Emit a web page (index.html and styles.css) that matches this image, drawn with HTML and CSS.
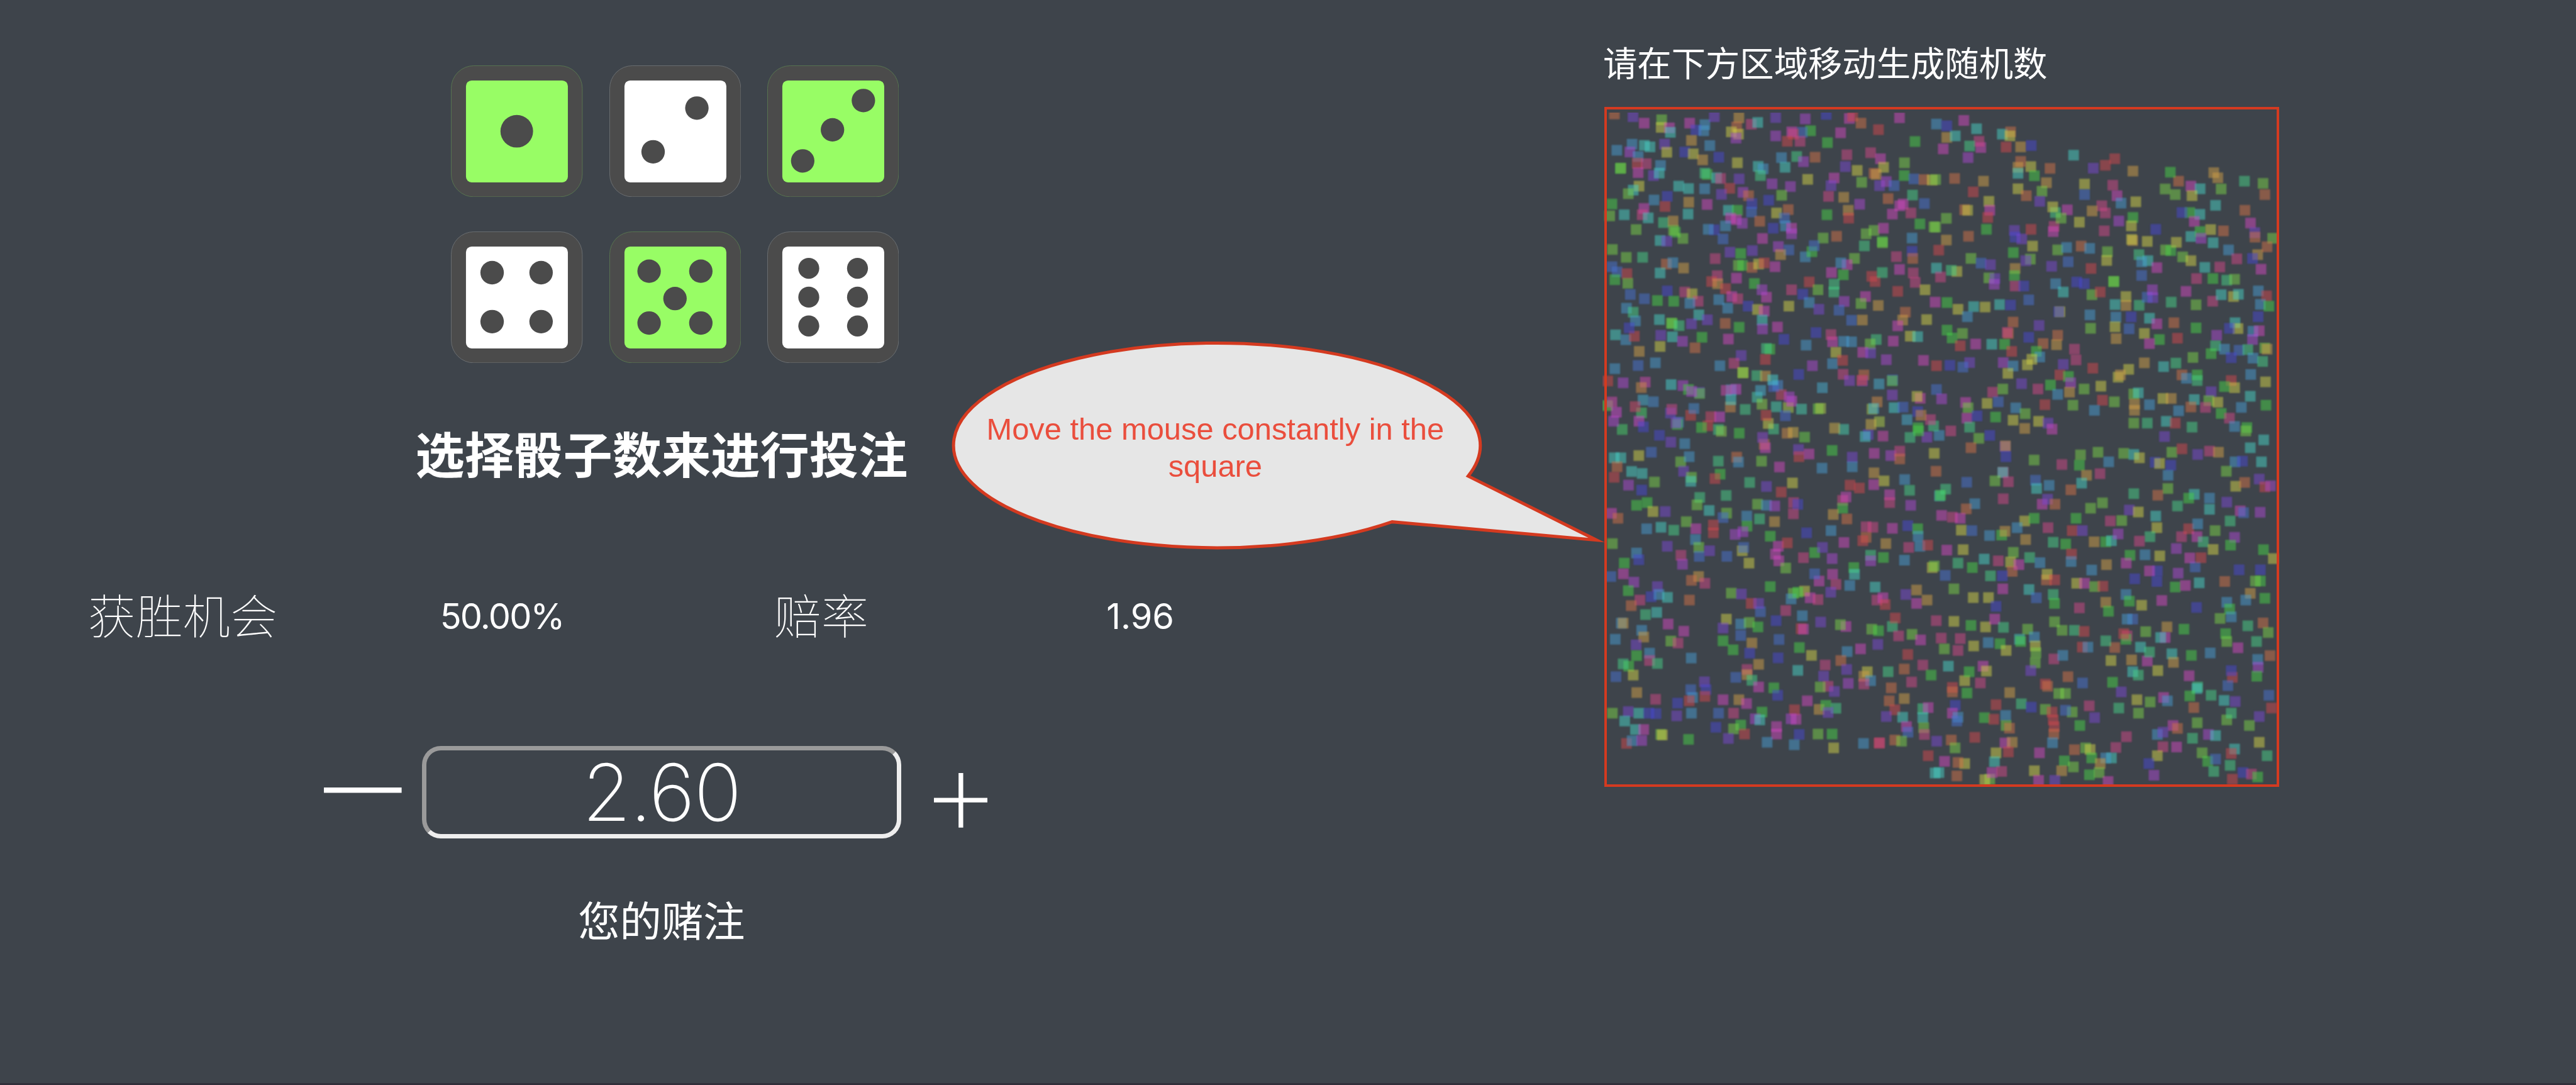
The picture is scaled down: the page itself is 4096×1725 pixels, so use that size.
FILE: index.html
```html
<!DOCTYPE html>
<html lang="zh-CN">
<head>
<meta charset="utf-8">
<title>Dice</title>
<link rel="stylesheet" href="styles.css">
</head>
<body>
<main class="stage">
  <section class="bet">
    <div class="dice">
      <svg class="die picked" viewBox="0 0 210 210"><rect class="edge" x=".5" y=".5" width="209" height="209" rx="36"/><rect class="face" x="24" y="24" width="162.500" height="162.500" rx="9"/><circle cx="105" cy="105" r="26"/></svg>
      <svg class="die" viewBox="0 0 210 210"><rect class="edge" x=".5" y=".5" width="209" height="209" rx="36"/><rect class="face" x="24" y="24" width="162.500" height="162.500" rx="9"/><circle cx="139.500" cy="68" r="18.700"/><circle cx="69.700" cy="137.700" r="18.700"/></svg>
      <svg class="die picked" viewBox="0 0 210 210"><rect class="edge" x=".5" y=".5" width="209" height="209" rx="36"/><rect class="face" x="24" y="24" width="162.500" height="162.500" rx="9"/><circle cx="153.300" cy="56" r="18.700"/><circle cx="104" cy="102.700" r="18.700"/><circle cx="56.500" cy="152.300" r="18.700"/></svg>
      <svg class="die" viewBox="0 0 210 210"><rect class="edge" x=".5" y=".5" width="209" height="209" rx="36"/><rect class="face" x="24" y="24" width="162.500" height="162.500" rx="9"/><circle cx="65.700" cy="65.700" r="18.700"/><circle cx="143.800" cy="65.700" r="18.700"/><circle cx="65.700" cy="143.700" r="18.700"/><circle cx="143.800" cy="143.700" r="18.700"/></svg>
      <svg class="die picked" viewBox="0 0 210 210"><rect class="edge" x=".5" y=".5" width="209" height="209" rx="36"/><rect class="face" x="24" y="24" width="162.500" height="162.500" rx="9"/><circle cx="63.300" cy="63.300" r="18.700"/><circle cx="145.800" cy="63.300" r="18.700"/><circle cx="104.600" cy="107" r="18.700"/><circle cx="63.300" cy="146" r="18.700"/><circle cx="145.800" cy="146" r="18.700"/></svg>
      <svg class="die" viewBox="0 0 210 210"><rect class="edge" x=".5" y=".5" width="209" height="209" rx="36"/><rect class="face" x="24" y="24" width="162.500" height="162.500" rx="9"/><circle cx="66.200" cy="58.700" r="16.700"/><circle cx="143.900" cy="58.700" r="16.700"/><circle cx="66.200" cy="104.700" r="16.700"/><circle cx="143.900" cy="104.700" r="16.700"/><circle cx="66.200" cy="150.700" r="16.700"/><circle cx="143.900" cy="150.700" r="16.700"/></svg>
    </div>
    <h1 class="heading">选择骰子数来进行投注</h1>
    <div class="stats">
      <span class="label">获胜机会</span><span class="value percent">50.00%</span>
      <span class="label">赔率</span><span class="value">1.96</span>
    </div>
    <div class="stake">
      <svg class="minus" viewBox="0 0 124 9"><rect width="124" height="8.500"/></svg>
      <div class="amount"><span>2.60</span></div>
      <svg class="plus" viewBox="0 0 86 87"><path d="M0 39.500h39.300V0h7.400v39.500H86v7.500H46.700v40h-7.400V47H0z"/></svg>
    </div>
    <p class="caption">您的赌注</p>
  </section>
  <section class="entropy">
    <h2 class="hint">请在下方区域移动生成随机数</h2>
    <div class="field"><canvas class="specks" id="specks" width="1080" height="1075"></canvas></div>
  </section>
  <aside class="bubble">
    <svg viewBox="0 0 1060 340"><path d="M826.900 216.500A420 163.200 0 1 0 705.500 289.500L1031.500 318.500Z"/></svg>
    <p>Move the mouse constantly in the<br>square</p>
  </aside>
</main>
<script>
// Hue of each colour letter.
const HUES = { r: 357, o: 18, a: 38, y: 60, l: 98, g: 120, t: 148, c: 175, s: 203, b: 222, i: 240, v: 262, p: 284, m: 308, k: 332 };

// Quadrants of the field: origin, then colour letter with the centre of each speck.
const QUADS = [
  [2530, 50, `o126,370 v209,382 m259,411 l337,396 y335,430 m372,432 c376,452 m462,411 s530,418 i490,442 s525,445 v572,382 a682,387 o672,428 y648,450 y680,460 p669,478 k737,416 c766,408 v846,386 i1072,372 p978,392 m1175,390 r1190,380 o1227,411 r1305,440 m1399,387 g1002,445 b965,452 p846,468 r925,460 m918,450 r898,492 k955,492 g1077,498 m1136,454 g1468,493 a470,488 s552,511 c260,510 s205,505 s137,532 c285,517 v350,505 y360,541 p195,540 s232,560 i440,540 y478,548 a520,575 i592,563 y675,588 c768,604 s790,615 t778,645 s872,565 t940,560 p970,583 o1022,563 c888,608 k1164,552 k1270,543 m1314,570 v1157,605 y1210,622 y1328,608 l1421,588 o1285,635 a1295,640 g152,613 l155,612 r228,590 k268,592 m232,632 s332,600 v300,645 c326,634 g540,640 t530,634 c582,655 k600,658 v683,660 p830,682 p912,694 y989,662 m1107,656 v1093,690 k1082,738 l1230,675 g1420,645 b1463,660 o1508,663 y1545,665 v1310,690 p1340,672 b1375,690 y236,692 c210,710 l188,726 c413,692 c457,703 s529,704 r641,702 v604,729 p700,720 o725,735 l873,733 i815,755 a1150,742 p1221,773 o1348,748 m1415,772 m1400,780 t1457,732 b1510,770 k1450,812 m1367,817 g115,772 s303,754 i362,738 r352,783 a458,764 m540,774 m258,792 k250,820 c277,834 c170,820 l105,825 c455,817 c635,800 g675,800 i740,770 b738,808 m645,835 m670,842 p697,858 o775,849 y850,812 o902,797 b885,835 g1075,820 a1170,800 r1172,835 l223,886 t345,855 a388,848 g398,898 l390,890 l432,926 c330,935 v360,938 i572,887 s545,885 s622,870 b611,928 m787,926 i835,880 s890,870 m917,880 p917,905 l1058,924 o1118,916 l1250,905 l1285,890 m1327,880 g1322,940 l1323,945 t1242,959 g1490,861 l1553,874 s1455,924 l117,975 l179,1010 t252,1010 k576,1016 v642,987 g690,993 v742,980 p858,962 b905,977 a868,998 s978,1008 g1008,985 b1018,958 l1198,1015 k1385,1007 i1455,983 o1458,1015 b115,1052 b138,1075 r182,1083 g128,1110 l186,1126 o358,1040 s387,1034 a435,1058 c330,1080 l680,1046 g698,1046 o740,1055 y770,1040 r795,1035 m843,1052 m1165,1043 s1137,1035 g1148,1088 m1095,1078 r1275,1095 r1290,1118 t1322,1078 m1399,1064 k1460,1080 k585,1092 r560,1118 a587,1128 m671,1103 g751,1127 r996,1120 l1035,1155 t1107,1130 t1106,1165 k1469,1122 y1513,1155 r1391,1162 b197,1176 b260,1195 i362,1160 k440,1165 y473,1173 g318,1203 g391,1206 k500,1206 s463,1215 c503,1267 s592,1199 s632,1237 r622,1150 m650,1185 k677,1195 m805,1188 p785,1155 i723,1228 y765,1243 m795,1250 c786,1290 p787,1330 k917,1155 i967,1175 s996,1212 y905,1228 v1039,1242 m1247,1185 p1152,1207 l1227,1216 a1304,1225 b1129,1246 s180,1237 t210,1255 s220,1294 c327,1288 g384,1305 l381,1304 t415,1315 v470,1307 v541,1289 o621,1305 g683,1322 m854,1321 b1185,1291 a1233,1290 o1425,1255 a1413,1290 m1391,1316 y1520,1288 i1026,1346 c131,1356 s177,1378 r215,1362 i192,1325 v333,1358 c385,1365 p430,1385 g517,1367 y330,1408 a237,1430 o486,1414 m635,1375 i883,1376 s982,1402 m1100,1387 s1150,1385 s1185,1387 k1093,1355 t1295,1377 l1268,1397 m1371,1384 y1447,1362 c1480,1364 g820,1420 t805,1417 v692,1448 k660,1483 r800,1466 y1115,1434 s1100,1485 r1145,1470 m1235,1434 v1270,1437 p1340,1467 m1506,1470 s128,1507 b232,1493 s309,1481 s597,1494 y700,1525 l700,1525 t762,1538 a800,1540 i949,1533 p1010,1494 k1147,1532 o1240,1535`],
  [3080, 150, `s24,135 i70,143 m146,119 c203,156 a70,195 c108,188 m222,240 k214,212 t172,233 p165,285 m54,246 c318,180 o355,170 y352,188 r335,238 a400,237 i447,231 c636,274 r820,290 r778,319 v724,332 a901,345 o531,333 y445,325 g461,366 o400,302 a388,328 c388,355 y388,424 o425,455 a515,397 l495,435 v485,480 a234,390 o105,378 l20,383 r188,438 y258,480 m262,520 r253,552 g247,605 o150,518 y163,520 y685,403 b685,450 k811,408 m830,455 s848,488 y914,482 k762,500 k778,532 a719,523 y662,573 g901,552 y894,590 a900,655 y895,650 y965,659 i1003,605 p838,568 k773,612 o1105,390 l1045,425 l1090,450 g1068,350 m1160,412 c1201,424 y1165,455 a1262,352 a1280,375 l1295,425 t1399,390 l1482,400 o1490,450 o1401,520 m1426,577 c1270,498 g1155,530 c1200,538 m1175,570 i1120,530 c1160,637 g1201,615 y1248,606 o1305,612 c1259,665 p1205,645 s1328,697 k1365,737 v1445,620 o1446,640 l1525,645 a1458,718 o1500,683 m1473,783 i1435,735 l68,556 l20,595 a68,653 o167,636 r34,698 l178,735 b223,756 v265,763 c24,778 y115,793 t90,788 k42,818 l258,822 v285,825 p282,850 v372,610 i375,640 v405,648 r446,605 k549,592 m545,615 t555,530 y543,505 m608,518 l580,555 y453,680 g367,709 l443,738 v423,745 a375,780 g372,812 k375,858 i414,858 l565,697 s605,686 o670,680 s708,690 l787,705 y784,744 v538,770 b612,750 r714,780 l1047,697 g1070,700 y1095,663 l1123,728 y1160,745 t928,718 c968,745 s940,750 m1008,776 b940,811 c1222,775 k1289,773 g1258,825 k1185,825 t1320,832 l1355,828 g816,838 l815,838 i650,840 i684,848 s556,848 c590,885 l718,897 r755,885 y870,905 a870,945 c821,941 t929,944 b965,908 v990,910 p988,875 m1138,882 t1072,930 l1183,942 k1257,926 c1295,897 y1350,905 c1372,895 s1461,880 r1498,902 s1470,940 g1508,948 m18,930 g71,932 y120,962 c190,950 y241,952 c306,941 i355,943 b436,920 s162,995 o366,1019 v482,1034 y575,973 i570,973 s709,987 l712,1047 s825,997 y821,1040 i893,996 b884,1049 a826,1093 c975,1002 m1008,1027 y952,1070 o1084,1022 g1183,1045 r1100,1091 g1019,1097 m975,1115 i1460,995 c1357,1022 y1370,1048 i1332,1047 s1437,1060 m1465,1058 p1435,1097 p1275,1078 t1270,1125 g1250,1160 g71,1055 g94,1090 l140,1070 r130,1125 m199,1117 c271,1118 g328,1118 o345,1070 k340,1065 i436,1087 o565,1078 a560,1120 o500,1115 k640,1140 k647,1188 r360,1150 g470,1150 s485,1175 y450,1185 y430,1210 p322,1200 s366,1215 y343,1248 v404,1294 v172,1200 b142,1220 i84,1212 r24,1214 v590,1208 r575,1255 g613,1262 p623,1290 a618,1332 r722,1225 l1169,1177 a952,1201 t1093,1202 c1038,1218 o1120,1255 s1140,1270 g1188,1255 t1188,1280 s1310,1140 b1375,1145 t1414,1142 i1340,1178 s1437,1180 l1490,1135 a1500,1140 t1480,1195 s1427,1253 y1493,1286 r1340,1280 g1310,1307 y1355,1312 v1250,1330 l1240,1370 y1280,1377 k1225,1400 c1175,1365 s1105,1415 o1160,1398 b24,1320 k275,1332 l320,1318 k477,1318 g533,1300 s565,1342 l683,1318 l633,1390 y758,1305 r765,1368 l818,1375 r508,1388 s729,1413 y835,1265 y882,1230 a845,1255 l905,1340 c925,1335 s975,1388 y1035,1360 a1072,1360 a908,1413 a908,1385 l905,1470 t965,1470 c1050,1462 r1090,1470 t1165,1488 v1042,1530 s1385,1400 c1425,1350 g1295,1427 k1332,1448 g1410,1490 l1405,1505 s1355,1485 c1485,1545 g1495,1390 p47,1362 y250,1382 m154,1378 l165,1402 m160,1448 i205,1438 t172,1488 g288,1443 b300,1375 s378,1402 l420,1428 y366,1457 y480,1462 a418,1494 v522,1470 m540,1497 k88,1505 s36,1525 i262,1525 l213,1538`],
  [2530, 700, `v378,15 s440,22 b291,60 y235,75 c125,85 c155,85 o138,125 r125,172 c203,146 c250,155 l305,193 p189,207 i248,229 l422,103 s460,80 v435,145 l470,172 c467,190 o672,82 s680,104 l783,100 t590,100 g598,158 r575,178 m863,126 v805,213 t730,195 y921,197 o795,25 m800,40 v948,48 r950,80 m995,68 g1098,52 s1053,131 v1188,82 s1188,125 m1286,65 p1360,75 k1400,55 o1400,90 a1285,152 m1284,205 y1330,188 s1422,182 t1444,230 m1355,250 k1355,285 p1449,297 r1178,207 r1220,220 r871,238 t625,253 t507,262 l495,295 g272,285 g225,297 y298,325 v353,325 c549,320 l627,332 b611,352 l765,292 s805,297 p842,300 k926,285 i945,293 k925,335 a841,370 t774,358 s717,345 g718,390 p700,415 p665,427 m113,333 o142,355 s270,402 c334,395 t391,408 l447,370 m490,402 r568,385 r568,420 s488,450 l503,485 b505,525 v362,480 l117,468 k423,520 p430,560 v551,500 y697,500 b703,485 b628,525 y727,555 g822,435 m858,480 m845,515 r898,465 m860,545 l891,577 k970,531 g1020,508 i984,420 s1093,410 v1055,485 p1098,535 m1151,463 k1145,275 m1160,260 g1145,310 a1103,338 o1164,358 k1250,393 k1280,395 o1250,440 r1235,455 m1367,400 i1436,388 g1480,402 s1482,435 a1338,468 k1440,485 s1490,480 r1525,475 s1421,542 g1327,530 t1270,520 p1270,545 g1195,575 c1198,605 s1177,655 c1290,662 s225,510 i235,540 g170,555 m166,603 b110,615 p213,640 g188,678 v318,660 i290,705 s325,695 c363,708 k240,720 o201,745 t265,785 c315,775 a502,615 o470,632 k530,645 o461,720 l648,689 v693,693 g822,660 r737,735 b778,772 v770,735 y975,680 l925,690 s915,715 g945,685 m1000,710 k1035,718 m1100,605 m1040,635 k1115,650 v1092,685 b1020,603 v1427,695 a1475,675 m1475,735 a1522,720 y1545,575 k1298,720 m1325,710 r1335,740 k891,767 s965,790 y626,805 v611,845 s690,827 l728,820 g767,840 b690,878 i848,812 b861,896 r960,848 m970,850 v1047,818 m1160,838 l1135,830 l1275,850 g1305,857 t1367,838 r1380,800 k1395,880 l1455,873 m1493,898 s157,823 a165,823 s248,855 a257,885 m366,827 m436,859 s130,895 l378,903 k410,912 v223,920 g225,968 s283,957 k283,990 t318,1003 g190,1015 t165,1005 y210,1055 b133,1062 s469,979 g611,902 g656,942 a740,912 i730,957 i857,978 g952,932 y1006,967 m1225,938 s1165,950 o1137,990 v1302,918 r1436,963 k1503,1010 t1348,1040 o1420,1028 g1540,1055 k718,1030 a770,1007 a718,1053 t740,1078 b668,1065 m770,1108 c945,1034 k1067,1010 v1163,1030 p1170,1092 v1060,1060 k1080,1105 l1045,1108 v1108,1128 y1255,1040 a1240,1060 s1270,1080 k1240,1095 k1453,1086 o1362,1112 o1353,1170 a1420,1160 a226,1133 k310,1163 b467,1120 v528,1085 i535,1120 r530,1150 s475,1155 r460,1170 i408,1180 v404,1237 s470,1225 m611,1165 a682,1165 m716,1182 g838,1112 i855,1145 b591,1225 k658,1225 g785,1220 p755,1250 c775,1255 m987,1170 r930,1210 p915,1250 m937,1252 a1040,1208 g1070,1190 t1115,1203 v1080,1222 r1378,1210 v1340,1240 c1413,1243 m1430,1285 b1437,1310 t1503,1205 m1527,1200 c1503,1245 l1507,1290 k1510,1320 l117,1225 v188,1218 c235,1225 i280,1225 i312,1227 c172,1260 c220,1298 m257,1298 l333,1320 y340,1322 g457,1342 r180,1360 s205,1348 p248,1347 i579,1288 g690,1278 l658,1295 r707,1318 v635,1338 m850,1285 m850,1318 s808,1355 i951,1320 s929,1366 l1035,1318 g1098,1318 y1105,1380 s1238,1360 r1308,1358 k1310,1358 o1378,1345 l1408,1350 r1527,1415 c1558,1492`],
  [3080, 700, `o178,40 v330,35 a332,32 i334,80 y14,65 o22,145 k322,150 c320,150 l285,188 k345,192 b159,194 t65,225 c38,255 g42,252 k322,268 s195,290 o157,313 m47,342 k95,350 m130,355 y135,408 b182,410 l460,95 s505,22 a530,15 b685,22 r785,25 l667,72 g662,118 k584,115 l745,60 s793,103 k754,156 a694,163 c672,198 o624,228 b466,185 c471,222 s527,208 m496,292 v520,270 o553,292 l765,286 l712,310 g647,355 k800,367 l851,365 t905,245 v885,318 y925,327 l860,65 c905,70 y930,85 i1000,105 y1020,110 i1070,118 s1058,163 l1057,222 o1012,252 l1075,60 r1120,45 v1190,70 k1243,55 a1283,60 c1425,40 s1357,103 i1390,100 c1475,103 l1318,145 y1360,212 o1400,195 v1465,180 r1490,215 p1515,210 c1175,248 g1150,265 t1100,300 s1243,265 c1243,315 v1320,283 m1380,322 b1395,330 p1469,328 t1335,367 c1003,345 y1008,397 t977,437 g888,520 k930,457 s955,518 y1021,523 a783,562 m871,555 s717,586 y418,367 g460,355 s384,397 k522,397 s261,432 g315,430 a330,413 a422,450 t545,462 g601,470 r630,410 v675,410 a728,460 g780,460 c805,455 p835,425 m70,497 y143,495 l14,568 t120,555 g184,575 b63,610 l102,670 y188,709 y256,709 k300,545 c237,537 l367,507 y355,550 o362,592 m392,562 t440,530 s486,553 t265,612 i318,612 m320,670 i290,748 c437,673 b470,710 r627,515 s625,548 o515,630 y518,605 r552,630 y650,645 m685,645 l730,660 r767,658 t545,695 g551,735 k662,755 a780,730 g792,770 s870,695 g885,725 y940,743 b900,805 s875,805 m1030,722 i1010,590 m975,590 i1008,637 i909,625 p1103,600 g1090,662 m1135,655 c1197,643 b1179,572 m1155,532 r1205,531 p1095,490 k1118,437 r1150,402 m1187,437 t1215,460 s1190,380 l1268,410 y1259,494 p1355,440 g1337,475 g1484,495 y1528,535 i1375,585 i1470,585 g1470,635 l1448,635 a1425,690 o1311,637 s1405,720 g1490,712 s1320,730 g1333,760 s1340,795 l1290,802 i1185,753 k23,812 y102,815 g178,833 y243,840 m284,805 t323,842 l551,817 l585,855 t640,855 r683,860 l431,850 s461,885 c395,895 g400,905 y465,925 l468,955 l465,1000 v445,1035 k45,890 k130,892 l59,938 k120,945 y190,925 s255,910 g308,915 y335,945 c77,1015 m232,1015 y247,1037 k548,983 s588,967 r675,930 s700,930 o820,932 t780,902 k875,880 g870,895 r860,870 y803,990 a895,987 c935,930 m965,992 t975,952 l958,861 a1053,840 m1045,887 c1025,887 c1075,960 a1082,998 g1129,850 g1162,967 s1246,956 g1315,870 l1320,905 m1370,933 t1414,835 o1482,822 l1505,865 t1453,905 s1458,985 p1460,1020 g1454,1060 o1513,968 y1012,1035 c900,1040 t925,1055 g810,1087 v849,1130 t838,1202 y919,1165 l978,1175 l926,1225 y150,1080 g170,1040 r95,1110 k220,1090 o95,1130 g160,1135 i108,1190 m95,1225 s120,1243 b115,1260 a351,1133 r290,1187 t403,1183 i447,1198 o611,1062 b676,1090 r510,1095 o520,1105 l570,1137 l600,1137 g238,1245 r280,1252 s333,1235 l335,1280 o350,1292 l510,1208 r540,1220 r545,1255 l630,1220 b600,1212 k706,1192 v730,1245 g664,1280 r550,1285 o548,1318 s542,1357 r195,1333 v25,1350 o90,1345 l107,1380 m330,1358 a362,1355 r345,1398 y290,1402 c283,1442 y150,1450 o120,1445 m60,1440 c35,1490 o115,1505 m484,1402 o640,1388 l690,1380 y710,1387 g717,1425 k825,1378 k872,1330 g595,1438 l635,1465 c805,1425 s780,1425 a755,1450 y461,1482 a583,1482 g707,1500 l750,1490 m480,1525 v552,1525 l262,1520 y240,1522 m272,1490 k315,1485 m790,1530 m1038,1155 s1055,1170 m1152,1058 r1345,1065 i1340,1035 b1325,1102 t1190,1108 c1187,1115 g1155,1148 t1250,1145 c1308,1168 v1358,1173 b1508,1145 r1520,1202 v1465,1240 o1173,1200 l1188,1268 l1320,1255 t1340,1225 l1421,1280 m1080,1280 o1100,1293 s1010,1320 v1035,1310 t1167,1337 p1238,1320 c1270,1325 k1035,1375 m1096,1376 y1010,1415 i972,1450 p995,1502 l1210,1402 g1235,1440 b1270,1430 c1355,1385 r1340,1405 t1335,1458 t1262,1485 y1465,1355 t1500,1415 i1392,1490 k1430,1497 g1458,1510 r1345,1520`]
];

const ctx = document.getElementById('specks').getContext('2d');
const LEFT = 2556, TOP = 180, SIZE = 17;
ctx.filter = 'blur(1.2px)';

function speck(x, y, hue) {
  ctx.fillStyle = `hsla(${hue}, 60%, 55%, .5)`;
  ctx.fillRect(x - LEFT - SIZE / 2, y - TOP - SIZE / 2, SIZE, SIZE);
}

for (const [ox, oy, list] of QUADS) {
  for (const item of list.split(' ')) {
    const [x, y] = item.slice(1).split(',').map(Number);
    if (oy === 700 && ox === 3080 && y < 30) continue;
    speck(ox + x / 2.8, oy + y / 2.8, HUES[item[0]]);
  }
}

// The band between the two left-hand quadrants is scattered evenly.
let seed = 11;
const rand = () => (seed = (seed * 16807) % 2147483647) / 2147483647;
for (let i = 0; i < 95; i++) {
  speck(2564 + rand() * 520, 606 + rand() * 92, Math.floor(rand() * 24) * 15);
}
</script>
</body>
</html>
```
FILE: styles.css
```css
html, body { margin: 0; background: #3e444b; overflow: hidden; }
* { box-sizing: border-box; }
.stage {
  zoom: 0.99708;
  position: relative;
  display: flex;
  width: 4108px;
  height: 1730px;
  background: #3e444b;
  border-bottom: 4px solid #312f3a;
  color: #fff;
  font-family: Inter, "Noto Sans CJK SC", sans-serif;
}
h1, h2, p { margin: 0; }
.bet {
  width: 2110px;
  padding-top: 104px;
  display: flex;
  flex-direction: column;
  align-items: center;
}
.dice {
  display: grid;
  grid-template-columns: repeat(3, 210px);
  gap: 55px 42px;
  margin-left: 43px;
}
.die { display: block; width: 210px; height: 210px; fill: #4b4b4b; }
.edge { stroke: #74777a; stroke-width: .8; }
.picked .edge { stroke: #5d7f52; }
.face { fill: #fff; }
.picked .face { fill: #98fd65; }
.heading {
  margin-top: 93px;
  font: 700 78.5px/100px "Noto Sans CJK SC", sans-serif;
}
.stats {
  display: grid;
  grid-template-columns: repeat(4, 509px);
  align-items: center;
  justify-items: center;
  height: 120px;
  margin-top: 151px;
}
.label {
  font: 100 75.5px/100px "Noto Sans CJK SC", sans-serif;
  padding-bottom: 8px;
}
.value { font-size: 56px; line-height: 70px; }
.percent { letter-spacing: -1.8px; }
.stake {
  display: flex;
  width: 1058px;
  height: 147px;
  margin-top: 147px;
  margin-left: -18px;
  fill: #fff;
}
.minus { width: 124px; height: 9px; margin-top: 65.5px; }
.amount {
  width: 764px;
  height: 147px;
  margin: 0 52px 0 32px;
  border: 8px solid;
  border-color: #9a9a9a #eee #eee #9a9a9a;
  border-radius: 30px;
  display: flex;
  justify-content: center;
  align-items: center;
  font-size: 126px;
  font-weight: 200;
  letter-spacing: -1.5px;
  line-height: 1;
}
.plus { width: 86px; height: 87px; margin-top: 43px; }
.caption {
  margin-top: 78px;
  font: 400 66.5px/100px "Noto Sans CJK SC", sans-serif;
}
.entropy { padding: 58px 0 0 448.5px; }
.hint { font: 400 54.5px/80px "Noto Sans CJK SC", sans-serif; margin-left: -2px; }
.field {
  position: relative;
  width: 1076px;
  height: 1084px;
  margin-top: 33px;
}
.specks {
  position: absolute;
  left: -3px;
  top: 9px;
}
.field::after {
  content: "";
  position: absolute;
  inset: 0;
  border: 5px solid #d43a20;
}
.bubble { position: absolute; left: 1514px; top: 543px; width: 1060px; height: 340px; }
.bubble svg { display: block; width: 1060px; height: 340px; fill: #e6e6e6; stroke: #d43a20; stroke-width: 5; stroke-miterlimit: 10; }
.bubble p {
  position: absolute;
  left: 24px;
  top: 112px;
  width: 800px;
  text-align: center;
  color: #ea4e3d;
  font: 49px/59px "Liberation Sans", sans-serif;
}
```
